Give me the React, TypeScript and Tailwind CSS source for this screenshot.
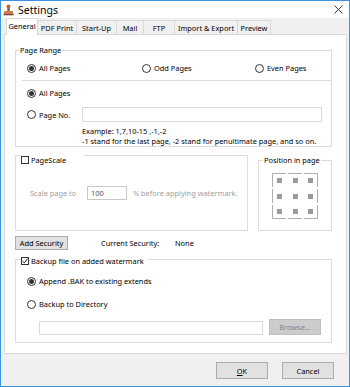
import React from 'react';

const Radio = ({ checked, label }: { checked?: boolean; label: string }) => (
  <span className="flex items-center gap-[3px]">
    <span className="w-[9px] h-[9px] rounded-full border border-[#333] bg-white flex items-center justify-center">
      {checked && <span className="w-[5px] h-[5px] rounded-full bg-[#333]" />}
    </span>
    <span>{label}</span>
  </span>
);

const Check = ({ checked, label }: { checked?: boolean; label: string }) => (
  <span className="flex items-center gap-[2px]">
    <span className="w-[8px] h-[8px] border border-[#333] bg-white flex items-center justify-center">
      {checked && (
        <svg width="6" height="6" viewBox="0 0 6 6">
          <path d="M0.4 3 L2.3 4.9 L5.6 0.7" stroke="#222" fill="none" strokeWidth="1" />
        </svg>
      )}
    </span>
    <span>{label}</span>
  </span>
);

const StampIcon = () => (
  <svg width="11" height="12" viewBox="0 0 11 12">
    <circle cx="5.5" cy="2.5" r="2" fill="#b5653a" />
    <rect x="4.3" y="4" width="2.4" height="3" fill="#9a5230" />
    <rect x="1" y="7" width="9" height="2.5" rx="0.6" fill="#d17c45" />
    <rect x="0.5" y="9.5" width="10" height="1.8" fill="#8a4428" />
  </svg>
);

const tabs = [
  { label: 'PDF Print', w: 'w-[40px]' },
  { label: 'Start-Up', w: 'w-[41px]' },
  { label: 'Mail', w: 'w-[28px]' },
  { label: 'FTP', w: 'w-[32px]' },
  { label: 'Import & Export', w: 'w-[64px]' },
  { label: 'Preview', w: 'w-[34px]' },
];

const cells = [
  'border-t border-l',
  'border-t',
  'border-t border-r',
  'border-l',
  '',
  'border-r',
  'border-b border-l',
  'border-b',
  'border-b border-r',
];

const btn = 'border border-[#adadad] bg-[#e1e1e1] flex items-center justify-center';

export default function App() {
  return (
    <div className="w-[350px] h-[387px] border border-[#3b93e0] bg-[#f0f0f0] flex flex-col text-[7.4px] leading-[12px] text-black font-['Noto_Sans',sans-serif]">
      {/* title bar */}
      <div className="h-[17px] bg-white flex items-center">
        <span className="ml-[2px] flex"><StampIcon /></span>
        <span className="ml-[4px] text-[10.5px]">Settings</span>
        <svg className="ml-auto mr-[6px]" width="9" height="9" viewBox="0 0 9 9">
          <path d="M0.5 0.5 L8.5 8.5 M8.5 0.5 L0.5 8.5" stroke="#222" strokeWidth="0.9" />
        </svg>
      </div>

      {/* tabs */}
      <div className="h-[16px] flex items-end pl-[5px]">
        <div className="relative z-10 w-[32px] h-[17px] -mb-px bg-white border border-b-0 border-[#d9d9d9] flex justify-center pt-[1px]">
          General
        </div>
        {tabs.map((t) => (
          <div
            key={t.label}
            className={`${t.w} h-[14px] -ml-px bg-[#f0f0f0] border border-b-0 border-[#d9d9d9] flex items-center justify-center`}
          >
            {t.label}
          </div>
        ))}
      </div>

      {/* panel */}
      <div className="ml-[3px] w-[343px] h-[320px] bg-white border border-[#d9d9d9] pl-[10px] flex flex-col">
        <fieldset className="mt-[9px] w-[317px] border border-[#dcdcdc]">
          <legend className="ml-[3px] px-[1px] leading-[12px]">Page Range</legend>
          <div className="mt-[4px] h-[16px] flex items-center pl-[11px]">
            <span className="w-[115px]"><Radio checked label="All Pages" /></span>
            <span className="w-[113px]"><Radio label="Odd Pages" /></span>
            <Radio label="Even Pages" />
          </div>
          <div className="mt-[4px] ml-[6px] h-px bg-[#dcdcdc]" />
          <div className="mt-[4px] h-[16px] flex items-center pl-[11px]">
            <Radio checked label="All Pages" />
          </div>
          <div className="mt-[6px] h-[15px] flex items-center pl-[11px]">
            <span className="w-[55px]"><Radio label="Page No." /></span>
            <div className="w-[240px] h-[15px] border border-[#d9d9d9] bg-white" />
          </div>
          <div className="mt-[4px] pl-[66px] leading-[10px]">
            <div>Example: 1,7,10-15 ,-1,-2</div>
            <div>-1 stand for the last page, -2 stand for penultimate page, and so on.</div>
          </div>
        </fieldset>

        <div className="-mt-[3px] flex items-start">
          <fieldset className="w-[233px] h-[87px] border border-[#dcdcdc]">
            <legend className="ml-[5px] pr-[18px] pt-[10px] leading-[12px]">
              <Check label="PageScale" />
            </legend>
            <div className="mt-[20px] h-[14px] flex items-center pl-[14px] text-[#a0a0a0]">
              <span className="w-[57px]">Scale page to</span>
              <div className="w-[40px] h-[14px] border border-[#c8c8c8] pl-[3px] flex items-center text-[#555]">100</div>
              <span className="ml-[6px]">% before applying watermark.</span>
            </div>
          </fieldset>

          <fieldset className="ml-[10px] mt-[10px] w-[74px] h-[77px] border border-[#dcdcdc]">
            <legend className="ml-[4px] px-[1px] leading-[12px]">Position in page</legend>
            <div className="mt-[7px] mx-auto w-[46px] grid grid-cols-3 gap-[2px]">
              {cells.map((c, i) => (
                <div key={i} className={`w-[14px] h-[14px] border-[#b0b0b0] flex items-center justify-center ${c}`}>
                  <span className="w-[5px] h-[5px] bg-[#9a9a9a]" />
                </div>
              ))}
            </div>
          </fieldset>
        </div>

        <div className="mt-[5px] h-[14px] flex items-center">
          <div className={`${btn} w-[53px] h-[14px]`}>Add Security</div>
          <span className="ml-[33px] w-[74px]">Current Security:</span>
          <span>None</span>
        </div>

        <fieldset className="mt-[1px] w-[317px] h-[92px] border border-[#dcdcdc]">
          <legend className="ml-[5px] pr-[4px] pt-[4px] leading-[12px]">
            <Check checked label="Backup file on added watermark" />
          </legend>
          <div className="mt-[6px] h-[16px] flex items-center pl-[11px]">
            <Radio checked label="Append .BAK to existing extends" />
          </div>
          <div className="mt-[7px] h-[16px] flex items-center pl-[11px]">
            <Radio label="Backup to Directory" />
          </div>
          <div className="mt-[7px] flex items-end pl-[23px]">
            <div className="w-[224px] h-[14px] border border-[#d9d9d9] bg-white" />
            <div className="ml-[6px] w-[52px] h-[16px] bg-[#cccccc] border border-[#bfbfbf] text-[#838383] flex items-center justify-center">
              Browse...
            </div>
          </div>
        </fieldset>
      </div>

      {/* footer */}
      <div className="flex justify-end gap-[14px] pr-[15px] pt-[8px]">
        <div className={`${btn} w-[52px] h-[17px]`}>
          <span><span className="underline">O</span>K</span>
        </div>
        <div className={`${btn} w-[52px] h-[17px]`}>Cancel</div>
      </div>
    </div>
  );
}
